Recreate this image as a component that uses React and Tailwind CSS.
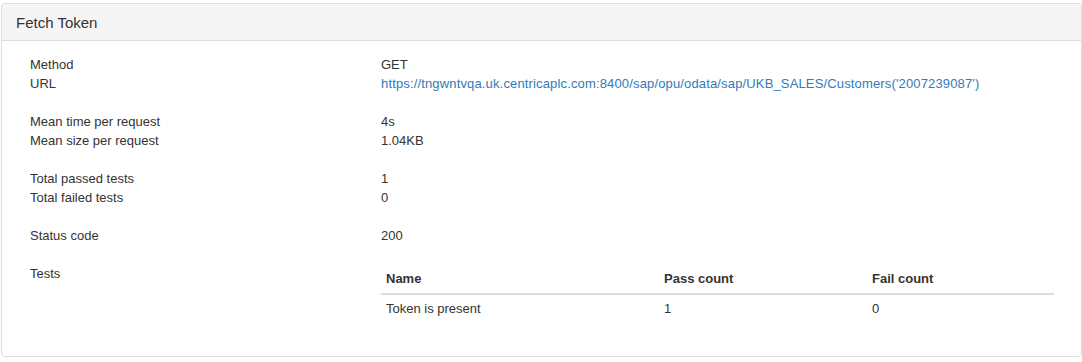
export default function App() {
  const rows = [
    ["Method", "GET"],
    ["URL", "link"],
    null,
    ["Mean time per request", "4s"],
    ["Mean size per request", "1.04KB"],
    null,
    ["Total passed tests", "1"],
    ["Total failed tests", "0"],
    null,
    ["Status code", "200"],
    null,
  ];
  return (
    <div
      className="bg-white pt-[3px] pl-[1px] text-[13px] leading-[19px] text-[#333]"
      style={{ fontFamily: '"Liberation Sans", Arial, sans-serif' }}
    >
      <div className="w-[1081px] h-[354px] border border-[#ddd] rounded-[4px] bg-white overflow-hidden">
        <div className="h-[37px] bg-[#f5f5f5] border-b border-[#ddd] flex items-center pl-[14px] text-[15px] leading-[17px] text-[#333]">
          Fetch Token
        </div>
        <div className="pt-[14px] pl-[28px]">
          {rows.map((r, i) =>
            r ? (
              <div key={i} className="flex h-[19px]">
                <div className="w-[351px] shrink-0">{r[0]}</div>
                <div>
                  {r[1] === "link" ? (
                    <a className="text-[#337ab7] no-underline tracking-[0.15px]" href="#">
                      https://tngwntvqa.uk.centricaplc.com:8400/sap/opu/odata/sap/UKB_SALES/Customers('2007239087')
                    </a>
                  ) : (
                    r[1]
                  )}
                </div>
              </div>
            ) : (
              <div key={i} className="h-[19px]" />
            )
          )}
          <div className="flex">
            <div className="w-[351px] shrink-0">Tests</div>
            <table className="w-[673px] border-collapse text-left table-fixed">
              <thead>
                <tr>
                  <th className="w-[278px] font-bold pt-[5px] pb-[5px] px-[5px] border-b-2 border-[#ddd]">Name</th>
                  <th className="w-[208px] font-bold pt-[5px] pb-[5px] px-[5px] border-b-2 border-[#ddd]">Pass count</th>
                  <th className="font-bold pt-[5px] pb-[5px] px-[5px] border-b-2 border-[#ddd]">Fail count</th>
                </tr>
              </thead>
              <tbody>
                <tr>
                  <td className="pt-[4px] pb-[5px] px-[5px]">Token is present</td>
                  <td className="pt-[4px] pb-[5px] px-[5px]">1</td>
                  <td className="pt-[4px] pb-[5px] px-[5px]">0</td>
                </tr>
              </tbody>
            </table>
          </div>
        </div>
      </div>
    </div>
  );
}
